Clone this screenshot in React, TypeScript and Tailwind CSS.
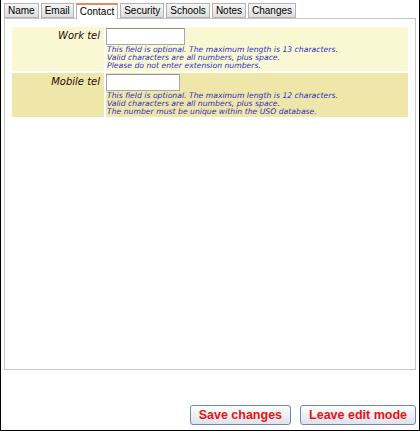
import React from 'react';

type Field = {
  label: string;
  inputWidth: string;
  hints: string[];
  rowBg: string;
};

const tabs = ['Name', 'Email', 'Contact', 'Security', 'Schools', 'Notes', 'Changes'];

const fields: Field[] = [
  {
    label: 'Work tel',
    inputWidth: 'w-[79px]',
    rowBg: 'bg-[#f9f8d2]',
    hints: [
      'This field is optional. The maximum length is 13 characters.',
      'Valid characters are all numbers, plus space.',
      'Please do not enter extension numbers.',
    ],
  },
  {
    label: 'Mobile tel',
    inputWidth: 'w-[74px]',
    rowBg: 'bg-[#efe6a9]',
    hints: [
      'This field is optional. The maximum length is 12 characters.',
      'Valid characters are all numbers, plus space.',
      'The number must be unique within the USO database.',
    ],
  },
];

const App: React.FC = () => {
  return (
    <div className="w-[420px] h-[431px] bg-white border-l border-r border-b border-black flex flex-col font-['Liberation_Sans',sans-serif]">
      {/* tab strip */}
      <div className="flex gap-[2px] pl-[3px] pt-[3px] h-[18px] relative z-10">
        {tabs.map((t) =>
          t === 'Contact' ? (
            <div
              key={t}
              className="h-[16px] px-[3px] bg-white border border-[#b4b4b4] border-t-2 border-t-[#e3895c] border-b-0 text-[10px] leading-[13px] text-black"
            >
              {t}
            </div>
          ) : (
            <div
              key={t}
              className="h-[15px] px-[3px] bg-gradient-to-b from-[#f6f6f6] to-[#dedede] border border-[#b4b4b4] text-[10px] leading-[13px] text-black"
            >
              {t}
            </div>
          )
        )}
      </div>

      {/* contact panel */}
      <div className="mx-[3px] h-[352px] border border-[#c6c6c6] px-[7px] pt-[8px]">
        <div className="flex flex-col gap-[2px]">
          {fields.map((f) => (
            <div key={f.label} className="flex gap-[2px]">
              <div
                className={`w-[92px] ${f.rowBg} text-right pr-[4px] pt-[3px] italic text-[10px] leading-[12px] text-[#2a0808] font-['DejaVu_Sans',sans-serif]`}
              >
                {f.label}
              </div>
              <div className={`flex-1 ${f.rowBg} pt-[1px] pb-[1px]`}>
                <input
                  type="text"
                  className={`${f.inputWidth} h-[17px] block bg-white border border-[#a3a8ae] border-t-[#8f949b] outline-none`}
                />
                <div className="mt-[1px] pl-[1px] italic text-[7.7px] leading-[8px] text-[#2f2fc4] font-['DejaVu_Sans',sans-serif]">
                  {f.hints.map((h) => (
                    <div key={h}>{h}</div>
                  ))}
                </div>
              </div>
            </div>
          ))}
        </div>
      </div>

      {/* action buttons */}
      <div className="mt-auto flex justify-end gap-[9px] pr-[3px] pb-[5px]">
        <button className="h-[20px] px-[8px] rounded-[3px] border border-[#7486b0] bg-gradient-to-b from-white to-[#dde2ec] text-[#ee1111] font-bold text-[12.5px] leading-[16px]">
          Save changes
        </button>
        <button className="h-[20px] px-[8px] rounded-[3px] border border-[#7486b0] bg-gradient-to-b from-white to-[#dde2ec] text-[#ee1111] font-bold text-[12.5px] leading-[16px]">
          Leave edit mode
        </button>
      </div>
    </div>
  );
};

export default App;
